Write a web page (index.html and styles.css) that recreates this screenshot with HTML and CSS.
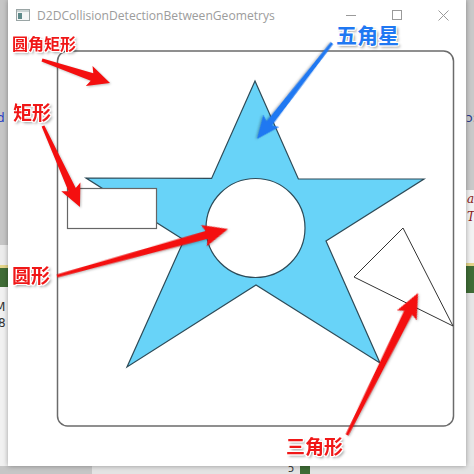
FILE: index.html
```html
<!DOCTYPE html>
<html>
<head>
<meta charset="utf-8">
<link rel="stylesheet" href="styles.css">
</head>
<body>
<div class="screen">
  <div class="strip strip-left">
    <div class="seg seg-grey-l"><span class="frag frag-d">d</span></div>
    <div class="seg seg-light"></div>
    <div class="seg seg-yellow"></div>
    <div class="seg seg-green"></div>
    <div class="seg seg-pale"><span class="frag frag-m">M</span><span class="frag frag-8">8</span></div>
  </div>
  <div class="window">
    <div class="titlebar">
      <svg class="appicon" viewBox="0 0 14 12" width="14" height="12">
        <rect x="0.5" y="0.5" width="13" height="11" fill="#f4f6f6" stroke="#9aa5a5"/>
        <rect x="1" y="1" width="12" height="2" fill="#c9d3d3"/>
        <rect x="2" y="4" width="4" height="6" fill="#5e8a8a"/>
      </svg>
      <span class="title">D2DCollisionDetectionBetweenGeometrys</span>
      <div class="controls">
        <span class="btn"><svg width="10" height="10" viewBox="0 0 10 10"><line x1="0" y1="5.5" x2="10" y2="5.5" stroke="#9a9a9a"/></svg></span>
        <span class="btn"><svg width="10" height="10" viewBox="0 0 10 10"><rect x="0.5" y="0.5" width="9" height="9" fill="none" stroke="#9a9a9a"/></svg></span>
        <span class="btn"><svg width="11" height="11" viewBox="0 0 11 11"><path d="M0.5 0.5 L10.5 10.5 M10.5 0.5 L0.5 10.5" stroke="#9a9a9a" fill="none"/></svg></span>
      </div>
    </div>
    <svg class="canvas" viewBox="8 30 458 436" width="458" height="436">
      <rect x="57.5" y="51" width="396" height="375" rx="10" ry="10" fill="none" stroke="#6b6b6b" stroke-width="1.5"/>
      <polygon class="star" points="255,81 298.4,179 424,179 326,241 380,363 256,285 127,367 184,240 86,178 211.6,178.4"/>
      <circle cx="255.5" cy="228" r="49.5" fill="#fff" stroke="#2e4b58" stroke-width="1.2"/>
      <rect x="67.5" y="188.5" width="89" height="40" fill="#fff" stroke="#666" stroke-width="1.2"/>
      <polygon points="403,228 354,277 453,326" fill="none" stroke="#333" stroke-width="1"/>
      <g class="arrows-red">
        <polygon transform="translate(42 60) rotate(18.7)" points="0,-1.5 52.8,-4 49.8,-10.5 71.8,0 49.8,10.5 52.8,4 0,1.5"/>
        <polygon transform="translate(43 126) rotate(65.45)" points="0,-1.5 70,-4 67,-10.5 89,0 67,10.5 70,4 0,1.5"/>
        <polygon transform="translate(57 276) rotate(-15.37)" points="0,-1.5 155.3,-4 152.3,-11 177.3,0 152.3,11 155.3,4 0,1.5"/>
        <polygon transform="translate(347 435) rotate(-63.43)" points="0,-1.5 136.8,-4.5 133.8,-11 158.8,0 133.8,11 136.8,4.5 0,1.5"/>
      </g>
      <polygon class="arrow-blue" transform="translate(332 43) rotate(128)" points="0,-1.5 101.8,-3.5 98.8,-10 121.8,0 98.8,10 101.8,3.5 0,1.5"/>
    </svg>
    <span class="label label-rr">圆角矩形</span>
    <span class="label label-rect">矩形</span>
    <span class="label label-circle">圆形</span>
    <span class="label label-star">五角星</span>
    <span class="label label-tri">三角形</span>
  </div>
  <div class="strip strip-right">
    <div class="seg seg-grey-r"><span class="frag frag-o">ɔ:</span></div>
    <div class="seg seg-light-r"><span class="frag frag-a">a</span><span class="frag frag-t">T</span></div>
    <div class="seg seg-yellow"></div>
    <div class="seg seg-green-r"></div>
    <div class="seg seg-pale-r"></div>
  </div>
</div>
<div class="bottom">
  <div class="bottom-dark"></div>
  <div class="bottom-light"><span class="frag frag-j">ɔ</span><span class="bottom-green"></span></div>
</div>
</body>
</html>
```
FILE: styles.css
```css
* { box-sizing: border-box; }
html, body { margin: 0; padding: 0; }
body {
  width: 474px;
  height: 474px;
  overflow: hidden;
  background: #e2e2e2;
  font-family: "Open Sans", sans-serif;
}
.screen { display: flex; height: 466px; }
.strip {
  width: 8px;
  display: flex;
  flex-direction: column;
  overflow: hidden;
}
.seg { flex: none; overflow: hidden; }
.seg-grey-l { height: 245px; background: #c6c6c6; padding-top: 112px; }
.seg-light { height: 20px; background: #ececec; }
.seg-yellow { height: 3px; background: #e4d58a; }
.seg-green { height: 19px; background: #3f6c36; }
.seg-pale { flex: 1; background: #f1f1f1; padding-top: 14px; display: flex; flex-direction: column; }
.seg-grey-r { height: 190px; background: #c9c9c9; padding-top: 112px; }
.seg-light-r { height: 73px; background: #f2f2f2; padding-top: 3px; display: flex; flex-direction: column; }
.seg-green-r { height: 27px; background: #3f6c36; }
.seg-pale-r { flex: 1; background: #e6e6e6; }
.frag { display: block; line-height: 1; font-family: "DejaVu Sans", sans-serif; font-size: 12px; }
.frag-d { color: #2a3fc4; margin-left: -3px; }
.frag-m { color: #333; margin-left: -5px; }
.frag-8 { color: #333; margin-left: -2px; margin-top: 4px; }
.frag-o { color: #2a3a8c; margin-left: 0; }
.frag-a { color: #8a1a1a; font-family: "DejaVu Serif", serif; font-style: italic; margin-left: 1px; }
.frag-t { color: #8a1a1a; font-family: "DejaVu Serif", serif; font-style: italic; margin-left: 1px; margin-top: 6px; }
.window {
  width: 458px;
  height: 466px;
  background: #fff;
  position: relative;
  z-index: 1;
  box-shadow: 0 0 5px rgba(0, 0, 0, 0.35);
  display: flex;
  flex-direction: column;
}
.titlebar {
  height: 30px;
  flex: none;
  display: flex;
  align-items: center;
  padding-left: 8px;
}
.appicon { display: block; margin-right: 7px; }
.title { font-size: 12.1px; color: #9c9c9c; white-space: nowrap; }
.controls { margin-left: auto; display: flex; height: 30px; }
.btn { width: 46px; height: 30px; display: flex; align-items: center; justify-content: center; }
.btn svg { display: block; }
.canvas { display: block; flex: none; }
.star { fill: #68d3f8; stroke: #2e4b58; stroke-width: 1.2; stroke-linejoin: miter; }
.arrows-red polygon { fill: #f40f0f; }
.arrow-blue { fill: #1f78f2; }
.arrows-red, .arrow-blue { filter: drop-shadow(1px 1px 1px rgba(0, 0, 0, 0.25)); }
.label {
  position: absolute;
  font-family: "Noto Sans CJK SC", sans-serif;
  font-weight: 700;
  line-height: 1;
  white-space: nowrap;
  color: #f01717;
  text-shadow:
    1px 0 #fff, -1px 0 #fff, 0 1px #fff, 0 -1px #fff,
    1px 1px #fff, -1px -1px #fff, 1px -1px #fff, -1px 1px #fff,
    2px 2px 3px rgba(0, 0, 0, 0.45);
}
.label-rr { font-size: 16px; left: 4px; top: 35px; }
.label-rect { font-size: 19px; left: 5px; top: 102px; }
.label-circle { font-size: 19px; left: 4px; top: 265px; }
.label-star { font-size: 21px; left: 328px; top: 24px; color: #1f78f2; }
.label-tri { font-size: 19px; left: 278px; top: 436px; }
.bottom { display: flex; height: 8px; }
.bottom-dark { width: 92px; background: #c6c6c6; }
.bottom-light { flex: 1; background: #e3e3e3; display: flex; align-items: flex-start; padding-left: 196px; }
.frag-j { color: #333; font-size: 11px; margin-top: -3px; width: 12px; }
.bottom-green { width: 10px; height: 8px; background: #3f6c36; }
```
